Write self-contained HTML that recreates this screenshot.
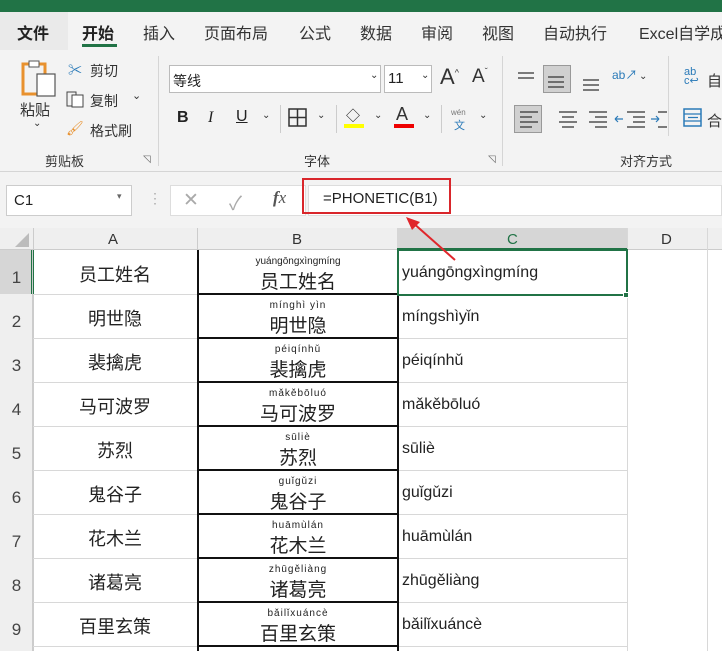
<!DOCTYPE html><html><head><meta charset="utf-8"><style>
*{margin:0;padding:0;box-sizing:border-box}
body{width:722px;height:651px;overflow:hidden;background:#fff;font-family:"Liberation Sans","Noto Sans CJK SC",sans-serif;position:relative;color:#222}
.a{position:absolute;white-space:nowrap}
.tab{position:absolute;top:20px;font-size:16px;color:#333;white-space:nowrap}
.sm{font-size:14px;color:#333}
.cell{position:absolute;font-size:17px;color:#222;text-align:center;white-space:nowrap}
.rn{position:absolute;left:0;width:33px;text-align:center;font-size:17px;color:#444}
.py{position:absolute;font-size:10px;text-align:center;color:#222;letter-spacing:1px;white-space:nowrap}
</style></head><body>
<div class="a" style="left:0;top:0;width:722px;height:12px;background:#217346"></div>
<div class="a" style="left:0;top:12px;width:722px;height:160px;background:#f3f3f3"></div>
<div class="a" style="left:0;top:12px;width:68px;height:38px;background:#eaeaea"></div>
<div class="tab" style="left:17px;font-weight:bold;color:#222">文件</div>
<div class="tab" style="left:82px;font-weight:bold;color:#222">开始</div>
<div class="a" style="left:82px;top:44px;width:35px;height:3px;background:#217346"></div>
<div class="tab" style="left:143px">插入</div>
<div class="tab" style="left:204px">页面布局</div>
<div class="tab" style="left:299px">公式</div>
<div class="tab" style="left:360px">数据</div>
<div class="tab" style="left:421px">审阅</div>
<div class="tab" style="left:482px">视图</div>
<div class="tab" style="left:543px">自动执行</div>
<div class="tab" style="left:639px">Excel自学成</div>
<!-- clipboard -->
<svg class="a" style="left:20px;top:60px" width="38" height="40"><rect x="3" y="4" width="22" height="30" fill="none" stroke="#e8912e" stroke-width="3"/><rect x="17" y="14" width="18" height="22" fill="#fff" stroke="#555" stroke-width="1.2"/><rect x="9" y="1" width="10" height="6" fill="#fff" stroke="#555"/></svg>
<div class="a sm" style="left:20px;top:99px;font-size:15px">粘贴</div>
<div class="a sm" style="left:33px;top:118px;font-size:10px">⌄</div>
<div class="a sm" style="left:68px;top:60px;color:#2a7ab8">✂</div><div class="a sm" style="left:90px;top:61px">剪切</div>
<svg class="a" style="left:66px;top:90px" width="20" height="18"><rect x="1" y="2" width="9" height="14" fill="none" stroke="#444"/><rect x="6" y="5" width="11" height="12" fill="#fff" stroke="#444"/></svg><div class="a sm" style="left:90px;top:91px">复制</div><div class="a sm" style="left:132px;top:89px;font-size:11px">⌄</div>
<div class="a sm" style="left:66px;top:120px;color:#e8912e">🖌</div><div class="a sm" style="left:90px;top:121px">格式刷</div>
<div class="a sm" style="left:45px;top:151px;font-size:13px">剪贴板</div><div class="a" style="left:143px;top:154px;font-size:10px;color:#666">◹</div>
<div class="a" style="left:158px;top:56px;width:1px;height:110px;background:#d5d5d5"></div>
<!-- font -->
<div class="a" style="left:169px;top:65px;width:212px;height:28px;background:#fff;border:1px solid #bbb;font-size:14px;padding:5px 3px">等线</div>
<div class="a sm" style="left:370px;top:70px;font-size:10px">⌄</div>
<div class="a" style="left:384px;top:65px;width:48px;height:28px;background:#fff;border:1px solid #bbb;font-size:15px;padding:4px 3px">11</div>
<div class="a sm" style="left:421px;top:70px;font-size:10px">⌄</div>
<div class="a" style="left:440px;top:64px;font-size:22px;color:#333">A<sup style="font-size:9px">^</sup></div>
<div class="a" style="left:472px;top:66px;font-size:19px;color:#333">A<sup style="font-size:9px">ˇ</sup></div>
<div class="a" style="left:177px;top:109px;font-size:16px;font-weight:bold">B</div>
<div class="a" style="left:208px;top:109px;font-size:16px;font-style:italic;font-family:'Liberation Serif',serif">I</div>
<div class="a" style="left:236px;top:108px;font-size:16px;text-decoration:underline">U</div><div class="a sm" style="left:262px;top:110px;font-size:10px">⌄</div>
<div class="a" style="left:280px;top:105px;width:1px;height:28px;background:#ccc"></div>
<svg class="a" style="left:288px;top:108px" width="20" height="20"><rect x="1" y="1" width="17" height="17" fill="none" stroke="#333" stroke-width="1.5"/><path d="M9.5 1v17M1 9.5h17" stroke="#333" stroke-width="1.5"/></svg><div class="a sm" style="left:317px;top:110px;font-size:10px">⌄</div>
<div class="a" style="left:336px;top:105px;width:1px;height:28px;background:#ccc"></div>
<div class="a" style="left:346px;top:106px;font-size:14px">◇</div><div class="a" style="left:344px;top:124px;width:20px;height:4px;background:#ffff00"></div><div class="a sm" style="left:374px;top:110px;font-size:10px">⌄</div>
<div class="a" style="left:396px;top:104px;font-size:18px;color:#333">A</div><div class="a" style="left:394px;top:124px;width:20px;height:4px;background:#e00"></div><div class="a sm" style="left:423px;top:110px;font-size:10px">⌄</div>
<div class="a" style="left:441px;top:105px;width:1px;height:28px;background:#ccc"></div>
<div class="a" style="left:451px;top:108px;font-size:8px;color:#777">wén</div><div class="a" style="left:454px;top:117px;font-size:11px;color:#2a7ab8">文</div><div class="a sm" style="left:479px;top:110px;font-size:10px">⌄</div>
<div class="a sm" style="left:304px;top:151px;font-size:13px">字体</div><div class="a" style="left:488px;top:154px;font-size:10px;color:#666">◹</div>
<div class="a" style="left:502px;top:56px;width:1px;height:110px;background:#d5d5d5"></div>
<!-- alignment -->
<div class="a" style="left:543px;top:65px;width:28px;height:28px;background:#d0d0d0;border:1px solid #999"></div>
<svg class="a" style="left:515px;top:68px" width="90" height="24"><path d="M3 5h16M3 10h16M33 9h16M33 14h16M33 19h16M68 12h16M68 17h16M68 22h16" stroke="#333" stroke-width="1.3"/></svg>
<div class="a" style="left:612px;top:66px;font-size:12px;color:#2a7ab8">ab↗</div><div class="a sm" style="left:639px;top:71px;font-size:10px">⌄</div>
<div class="a" style="left:514px;top:105px;width:28px;height:28px;background:#d0d0d0;border:1px solid #999"></div>
<svg class="a" style="left:517px;top:109px" width="150" height="20"><path d="M3 3h18M3 8h12M3 13h18M3 18h12M42 3h18M45 8h12M42 13h18M45 18h12M72 3h18M78 8h12M72 13h18M78 18h12M110 3h18M116 8h12M116 13h12M110 18h18M141 3h9M141 18h9" stroke="#333" stroke-width="1.2"/><path d="M98 10h8M98 10l3-3M98 10l3 3M134 10h8M142 10l-3-3M142 10l-3 3" stroke="#2a7ab8" stroke-width="1.2"/></svg>
<div class="a" style="left:668px;top:56px;width:1px;height:80px;background:#d5d5d5"></div>
<div class="a" style="left:684px;top:68px;font-size:11px;color:#2a7ab8;line-height:9px">ab<br>c↩</div><div class="a sm" style="left:707px;top:70px;font-size:15px">自</div>
<svg class="a" style="left:683px;top:108px" width="20" height="20"><rect x="1" y="1" width="17" height="17" fill="none" stroke="#2a7ab8" stroke-width="1.5"/><path d="M1 6h17M1 13h17M5 9.5h10" stroke="#2a7ab8" stroke-width="1.3"/></svg><div class="a sm" style="left:707px;top:110px;font-size:15px">合</div>
<div class="a sm" style="left:620px;top:151px;font-size:13px">对齐方式</div>
<div class="a" style="left:0;top:171px;width:722px;height:1px;background:#d5d5d5"></div>
<!-- formula bar -->
<div class="a" style="left:0;top:172px;width:722px;height:56px;background:#f3f3f3"></div>
<div class="a" style="left:6px;top:185px;width:126px;height:31px;background:#fff;border:1px solid #ccc;font-size:15px;padding:6px 7px">C1</div>
<div class="a" style="left:117px;top:191px;font-size:9px;color:#666">▾</div>
<div class="a" style="left:148px;top:190px;font-size:14px;color:#aaa">⋮</div>
<div class="a" style="left:170px;top:185px;width:136px;height:31px;background:#fff;border:1px solid #ddd"></div>
<div class="a" style="left:183px;top:189px;font-size:19px;color:#aaa">✕</div>
<div class="a" style="left:229px;top:189px;font-size:19px;color:#aaa">✓</div>
<div class="a" style="left:273px;top:188px;font-size:17px;font-style:italic;font-family:'Liberation Serif',serif;color:#555"><b>f</b>x</div>
<div class="a" style="left:308px;top:185px;width:414px;height:31px;background:#fff;border:1px solid #ddd"></div>
<div class="a" style="left:302px;top:178px;width:149px;height:36px;border:2px solid #d9262b"></div>
<div class="a" style="left:323px;top:190px;font-size:15px;color:#222">=PHONETIC(B1)</div>
<!-- headers -->
<div class="a" style="left:0;top:228px;width:722px;height:22px;background:#efefef;border-bottom:1px solid #ccc"></div>
<div class="a" style="left:397px;top:228px;width:230px;height:22px;background:#d6d6d6;border-bottom:2px solid #217346"></div>
<svg class="a" style="left:14px;top:232px" width="16" height="16"><path d="M15 1L15 15L1 15Z" fill="#bcbcbc"/></svg>
<div class="a" style="left:33px;top:228px;width:1px;height:423px;background:#ccc"></div>
<div class="a" style="left:108px;top:231px;font-size:15px;color:#333">A</div>
<div class="a" style="left:197px;top:228px;width:1px;height:22px;background:#ccc"></div>
<div class="a" style="left:292px;top:231px;font-size:15px;color:#333">B</div>
<div class="a" style="left:507px;top:231px;font-size:15px;color:#217346">C</div>
<div class="a" style="left:627px;top:228px;width:1px;height:423px;background:#d8d8d8"></div>
<div class="a" style="left:661px;top:231px;font-size:15px;color:#333">D</div>
<div class="a" style="left:707px;top:228px;width:1px;height:423px;background:#d8d8d8"></div>
<div class="a" style="left:0;top:250px;width:33px;height:401px;background:#efefef"></div>
<div class="a" style="left:0;top:250px;width:33px;height:44px;background:#d6d6d6;border-right:2px solid #217346"></div>
<div id="g"></div>
<div class="a" style="left:33px;top:250px;width:1px;height:44px;background:#217346"></div>
<div class="a" style="left:197px;top:250px;width:2px;height:401px;background:#111"></div>
<div class="a" style="left:397px;top:250px;width:2px;height:401px;background:#111"></div>
<div class="a" style="left:397px;top:249px;width:231px;height:47px;border:2px solid #217346"></div>
<div class="a" style="left:623px;top:292px;width:6px;height:6px;background:#217346;border:1px solid #fff"></div>
<svg class="a" style="left:400px;top:214px" width="60" height="50"><path d="M55 46L12 8" stroke="#e0262b" stroke-width="2"/><path d="M6 3L20 8L12 16Z" fill="#e0262b"/></svg>
<script>
var d=[["员工姓名","yuángōngxìngmíng","yuángōngxìngmíng"],["明世隐","míngshìyǐn","mínghì yìn"],["裴擒虎","péiqínhǔ","péiqínhǔ"],["马可波罗","mǎkěbōluó","mǎkěbōluó"],["苏烈","sūliè","sūliè"],["鬼谷子","guǐgǔzi","guǐgǔzi"],["花木兰","huāmùlán","huāmùlán"],["诸葛亮","zhūgěliàng","zhūgěliàng"],["百里玄策","bǎilǐxuáncè","bǎilǐxuáncè"]];
var h="";
for(var i=0;i<9;i++){var t=250+i*44;
h+='<div class="a" style="left:33px;top:'+(t+44)+'px;width:594px;height:1px;background:#d8d8d8"></div>';
h+='<div class="a" style="left:197px;top:'+(t+43)+'px;width:202px;height:2px;background:#111"></div>';
h+='<div class="rn" style="top:'+(t+18)+'px">'+(i+1)+'</div>';
h+='<div class="cell" style="left:33px;width:164px;top:'+(t+11)+'px;font-size:18px">'+d[i][0]+'</div>';
h+='<div class="py" style="left:197px;width:202px;top:'+(t+6)+'px;'+(i==0?'letter-spacing:0':'')+'">'+d[i][2]+'</div>';
h+='<div class="cell" style="left:197px;width:202px;top:'+(t+17)+'px;font-size:19px">'+d[i][0]+'</div>';
h+='<div class="a" style="left:402px;top:'+(t+14)+'px;font-size:16px">'+d[i][1]+'</div>';}
document.getElementById("g").innerHTML=h;
</script>
<div class="a" style="left:0;top:250px;width:33px;height:401px;border-right:1px solid #ccc"></div>
</body></html>
